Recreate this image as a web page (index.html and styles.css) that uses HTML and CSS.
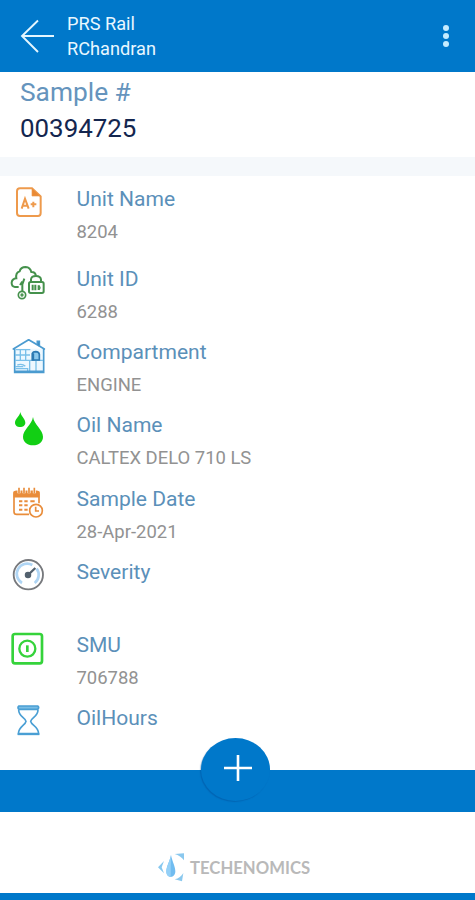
FILE: index.html
```html
<!DOCTYPE html>
<html lang="en">

<head>
  <meta charset="UTF-8">
  <meta name="viewport" content="width=device-width, initial-scale=1.0">
  <title>Sample Details</title>
  <link rel="stylesheet" href="styles.css">
</head>

<body>
  <header class="header">
    <svg class="back" viewBox="0 0 36 36" fill="none" stroke="#e4f6ff" stroke-width="1.9">
      <path d="M19 2.500L3 18L19 34M3 18H35" />
    </svg>
    <div class="user">
      <div class="company">PRS Rail</div>
      <div class="username">RChandran</div>
    </div>
    <div class="menu">
      <span></span>
      <span></span>
      <span></span>
    </div>
  </header>

  <section class="sample">
    <div class="sample-label">Sample #</div>
    <div class="sample-number">00394725</div>
  </section>

  <main class="details">
    <div class="row row-first">
      <svg class="icon" viewBox="0 33 192 180" fill="none" stroke="#ee9a4c" stroke-width="6">
        <path d="M96 40H60Q51 40 51 49V114Q51 123 60 123H114Q122 123 122 114V64Z" />
        <path d="M96 40V63H121Z" fill="#e98a35" stroke-width="2" />
        <path d="M65 101L75 71L86 101M69 92H82M92 88H109M100 80V97" />
      </svg>
      <div class="info">
        <div class="label">Unit Name</div>
        <div class="value">8204</div>
      </div>
    </div>
    <div class="row">
      <svg class="icon" viewBox="0 33 192 180" fill="none" stroke="#45914c" stroke-width="6">
        <path d="M56 96H45Q34 94 35 82Q37 71 49 70Q46 53 59 49Q62 36 77 36Q91 37 94 51Q105 50 108 62" />
        <path d="M67 109V82M67 88L73 71M67 80L60 90" />
        <circle cx="66" cy="120" r="11" stroke-width="5" />
        <circle cx="66" cy="120" r="3" stroke-width="4" />
        <path d="M93 80V73Q94 63 108 63Q122 63 123 74V80" />
        <rect x="87" y="81" width="44" height="33" rx="5" />
        <path d="M98 89V106M106 89V106M116 91V105" />
        <path d="M116 92Q124 98 116 104" stroke-width="4" />
      </svg>
      <div class="info">
        <div class="label">Unit ID</div>
        <div class="value">6288</div>
      </div>
    </div>
    <div class="row">
      <svg class="icon" viewBox="0 27 192 180" fill="none" stroke="#4b9bd0" stroke-width="5">
        <path d="M44 56V127H131V56" fill="#edf8ff" />
        <path d="M40 57L86 29L133 57" stroke-linecap="round" />
        <path d="M112 42V34H118V49" fill="#2c79b2" />
        <path d="M48 59H91M45 75H90M45 91H129M61 60V91M77 60V91M45 110H70M89 92V126M108 92V126" stroke="#7ac0e9" stroke-width="4" />
        <path d="M47 116H83V125M52 105Q67 100 76 109" stroke="#7ac0e9" stroke-width="4" />
        <path d="M97 90V70Q99 65 107 65Q117 66 118 73V90Z" fill="#8cc9ed" stroke="#2c79b2" />
        <path d="M99 70V91" stroke="#2c79b2" stroke-width="7" />
        <path d="M44 124H131" />
      </svg>
      <div class="info">
        <div class="label">Compartment</div>
        <div class="value">ENGINE</div>
      </div>
    </div>
    <div class="row">
      <svg class="icon" viewBox="0 36 192 180" fill="#12cf14">
        <path d="M61 36C59 49 45 57 45 68C45 76 52 81 60 81C69 81 76 76 76 68C76 57 63 49 61 36Z" />
        <path d="M99 51C96 73 69 90 69 110C69 126 82 136 99 136C117 136 129 126 129 110C129 90 102 73 99 51Z" />
      </svg>
      <div class="info">
        <div class="label">Oil Name</div>
        <div class="value">CALTEX DELO 710 LS</div>
      </div>
    </div>
    <div class="row">
      <svg class="icon" viewBox="0 31 192 180" fill="none" stroke="#e98d3b" stroke-width="5">
        <path d="M87 116H50Q42 116 42 108V54Q42 47 50 47H109Q117 47 117 54V83" />
        <path d="M43 50H116V63H43Z" fill="#e98d3b" />
        <path d="M57 39V53M72 39V53M87 39V53M103 39V53" stroke="#fff" stroke-width="9" />
        <path d="M57 36V53M72 36V53M87 36V53M103 36V53" />
        <path d="M57 77H67M73 77H83M91 77H104M57 89H67M73 89H83M57 102H67M73 102H83" stroke-width="6" />
        <circle cx="108" cy="105" r="19" fill="#fff" />
        <path d="M107 93V106H117" />
      </svg>
      <div class="info">
        <div class="label">Sample Date</div>
        <div class="value">28-Apr-2021</div>
      </div>
    </div>
    <div class="row">
      <svg class="icon" viewBox="0 42 192 180" fill="none" stroke="#77797d" stroke-width="5.500">
        <circle cx="85" cy="89" r="44" />
        <path d="M66 114A31 31 0 0 1 97 60M110 71A31 31 0 0 1 104 114" stroke="#afd5f4" stroke-width="8" />
        <circle cx="84" cy="90" r="7" fill="#53616e" stroke="#53616e" />
        <path d="M84 90L106 69" stroke="#53616e" stroke-width="7" />
      </svg>
      <div class="info">
        <div class="label">Severity</div>
      </div>
    </div>
    <div class="row">
      <svg class="icon" viewBox="0 36 192 180" fill="none" stroke="#35d33b" stroke-width="8">
        <rect x="38" y="42" width="88" height="88" rx="7" />
        <circle cx="82" cy="86" r="24" stroke-width="7" />
        <path d="M82 76V96" />
      </svg>
      <div class="info">
        <div class="label">SMU</div>
        <div class="value">706788</div>
      </div>
    </div>
    <div class="row">
      <svg class="icon" viewBox="0 30 192 180" fill="none" stroke="#4a9fd4" stroke-width="5">
        <path d="M57 33H113Q119 37 113 43H57Q51 38 57 33Z" fill="#78bde5" />
        <path d="M56 44C56 65 76 68 78 79C76 91 56 94 55 116H116C115 94 94 91 92 79C94 68 114 65 114 44" />
        <path d="M53 118H118" />
      </svg>
      <div class="info">
        <div class="label">OilHours</div>
      </div>
    </div>
  </main>

  <div class="action-bar">
    <div class="add-button">
      <svg viewBox="0 0 28 28" stroke="#fff" stroke-width="2.600">
        <path d="M14 1V27M0 14H28" />
      </svg>
    </div>
  </div>

  <footer class="footer">
    <svg class="logo" viewBox="50 380 84 90">
      <path d="M92 389C89 406 78 424 78 438C78 449 84 455 91 455C99 455 105 448 105 438C105 424 95 406 92 389Z" fill="#70bcf0" />
      <path d="M92 389C89 406 78 424 78 438C78 449 84 455 91 455Z" fill="#94d0f7" />
      <path d="M71 407L53 426L71 444L64 426Z" fill="#87c8ef" />
      <path d="M103 386L131 384V405Q121 391 103 386Z" fill="#8ac8ee" />
      <path d="M103 462Q121 458 129 443L125 468Z" fill="#8ac8ee" />
    </svg>
    <span class="brand">TECHENOMICS</span>
  </footer>
  <div class="bottom-line"></div>
</body>

</html>
```

FILE: styles.css
```css
* {
  box-sizing: border-box;
}

body {
  margin: 0;
  height: 900px;
  display: flex;
  flex-direction: column;
  overflow: hidden;
  background-color: #fff;
  font-family: Roboto, sans-serif;
}

.header {
  display: flex;
  height: 72px;
  padding: 11px 26px 0 19px;
  background-color: #0078ca;
  color: #e8f7ff;
}

.back {
  width: 36px;
  height: 36px;
  margin-top: 7px;
}

.user {
  flex: 1;
  padding-left: 12px;
  font-size: 18.200px;
  line-height: 25px;
}

.menu {
  display: flex;
  flex-direction: column;
  gap: 2px;
  padding-top: 14px;
}

.menu span {
  width: 6px;
  height: 6px;
  border-radius: 50%;
  background-color: #c5ecff;
}

.sample {
  height: 104px;
  padding: 2px 20px 0;
  border-bottom: 19px solid #f5f8fb;
  line-height: 36px;
}

.sample-label {
  color: #6594bd;
  font-size: 26.300px;
}

.sample-number {
  color: #14264f;
  font-size: 25.900px;
}

.details {
  height: 594px;
  padding-top: 10px;
}

.row {
  display: flex;
  height: 73.200px;
}

.row-first {
  height: 80px;
}

.icon {
  width: 64px;
  height: 60px;
}

.info {
  padding-left: 12.500px;
}

.label {
  color: #5b90b9;
  font-size: 21.050px;
  line-height: 26px;
}

.value {
  margin-top: 8px;
  color: #929292;
  font-size: 18.450px;
  line-height: 24px;
}

.action-bar {
  display: flex;
  justify-content: center;
  height: 42px;
  background-color: #0078ca;
}

.add-button {
  display: flex;
  align-items: center;
  justify-content: center;
  width: 69px;
  height: 63px;
  margin: -32px 4px 0 0;
  border-radius: 50%;
  background-color: #0078ca;
  box-shadow: -1px 1px 1px rgba(0, 70, 140, 0.35);
}

.add-button svg {
  width: 28px;
  height: 28px;
  margin: 0 0 3px 4px;
}

.footer {
  display: flex;
  align-items: center;
  height: 81px;
  padding: 28px 0 0 157px;
}

.logo {
  width: 28px;
  height: 30px;
}

.brand {
  margin: 2px 0 0 5px;
  color: #b9b9b9;
  font-family: Lato, sans-serif;
  font-size: 16.700px;
  font-weight: bold;
}

.bottom-line {
  height: 7px;
  background-color: #0078ca;
}
```
